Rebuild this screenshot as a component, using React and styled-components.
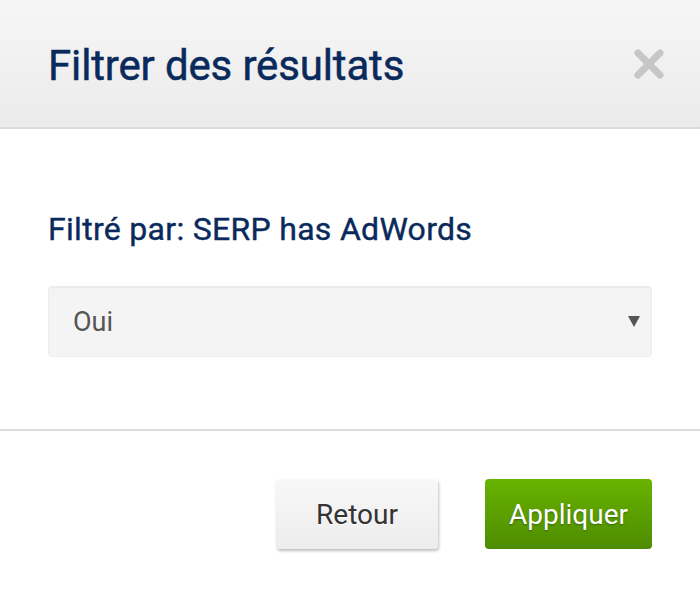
import React, { useState } from 'react';
import styled, { createGlobalStyle } from 'styled-components';

const GlobalStyle = createGlobalStyle`
  html, body {
    margin: 0;
    padding: 0;
    background: #fff;
  }
  body {
    font-family: Roboto, "Liberation Sans", Arial, sans-serif;
  }
`;

const Modal = styled.div`
  width: 700px;
  background: #fff;
`;

const Header = styled.div`
  display: flex;
  align-items: center;
  justify-content: space-between;
  height: 127px;
  padding: 0 36px 0 48px;
  background: linear-gradient(to bottom, #f6f6f6, #ebebeb);
  border-bottom: 2px solid #dcdcdc;
`;

const Title = styled.h1`
  margin: 3px 0 0;
  font-size: 42px;
  font-weight: 400;
  letter-spacing: -0.15px;
  color: #0a2a5c;
  -webkit-text-stroke: 0.5px #0a2a5c;
`;

const CloseButton = styled.button`
  display: flex;
  align-items: center;
  justify-content: center;
  width: 30px;
  height: 30px;
  padding: 0;
  border: none;
  background: none;
  cursor: pointer;
`;

const Body = styled.div`
  padding: 82px 48px 72px;
  border-bottom: 2px solid #dcdcdc;
`;

const Label = styled.div`
  font-size: 32px;
  line-height: 36px;
  font-weight: 400;
  letter-spacing: 0.3px;
  color: #0a2a5c;
  -webkit-text-stroke: 0.4px #0a2a5c;
  margin-bottom: 39px;
`;

const SelectWrap = styled.div`
  position: relative;
`;

const Select = styled.select`
  appearance: none;
  width: 100%;
  height: 71px;
  padding: 0 24px;
  font-family: Roboto, "Liberation Sans", Arial, sans-serif;
  font-size: 27px;
  color: #555;
  background: #f4f4f4;
  border: 1px solid #ececec;
  border-radius: 4px;
  box-shadow: inset 0 1px 1px rgba(0, 0, 0, 0.04);
  outline: none;
`;

const Arrow = styled.svg`
  position: absolute;
  right: 12px;
  top: 30px;
  pointer-events: none;
`;

const Footer = styled.div`
  display: flex;
  justify-content: flex-end;
  gap: 47px;
  padding: 48px 48px 47px;
`;

const Button = styled.button`
  height: 70px;
  padding: 0 ${(p) => (p.$primary ? '24px' : '40px')};
  font-family: Roboto, "Liberation Sans", Arial, sans-serif;
  font-size: 28px;
  border-radius: 4px;
  cursor: pointer;
  border: none;
  color: ${(p) => (p.$primary ? '#fff' : '#333')};
  background: ${(p) =>
    p.$primary
      ? 'linear-gradient(to bottom, #68b300, #4e8c00)'
      : 'linear-gradient(to bottom, #f8f8f8, #ececec)'};
  box-shadow: ${(p) =>
    p.$primary ? 'none' : '1px 2px 3px rgba(0, 0, 0, 0.25)'};
  text-shadow: ${(p) =>
    p.$primary ? '0 1px 2px rgba(0, 0, 0, 0.35)' : '0 1px 0 #fff'};
`;

function CloseIcon() {
  return (
    <svg width="30" height="30" viewBox="0 0 30 30">
      <path
        d="M4 4 L26 26 M26 4 L4 26"
        stroke="#c6c6c6"
        strokeWidth="7"
        strokeLinecap="round"
      />
    </svg>
  );
}

function App() {
  const [value, setValue] = useState('oui');

  return (
    <>
      <GlobalStyle />
      <Modal>
        <Header>
          <Title>Filtrer des résultats</Title>
          <CloseButton aria-label="Fermer">
            <CloseIcon />
          </CloseButton>
        </Header>
        <Body>
          <Label>Filtré par: SERP has AdWords</Label>
          <SelectWrap>
            <Select value={value} onChange={(e) => setValue(e.target.value)}>
              <option value="oui">Oui</option>
              <option value="non">Non</option>
            </Select>
            <Arrow width="12" height="11" viewBox="0 0 12 11">
              <polygon points="0,0 12,0 6,11" fill="#555" />
            </Arrow>
          </SelectWrap>
        </Body>
        <Footer>
          <Button>Retour</Button>
          <Button $primary>Appliquer</Button>
        </Footer>
      </Modal>
    </>
  );
}

export default App;
